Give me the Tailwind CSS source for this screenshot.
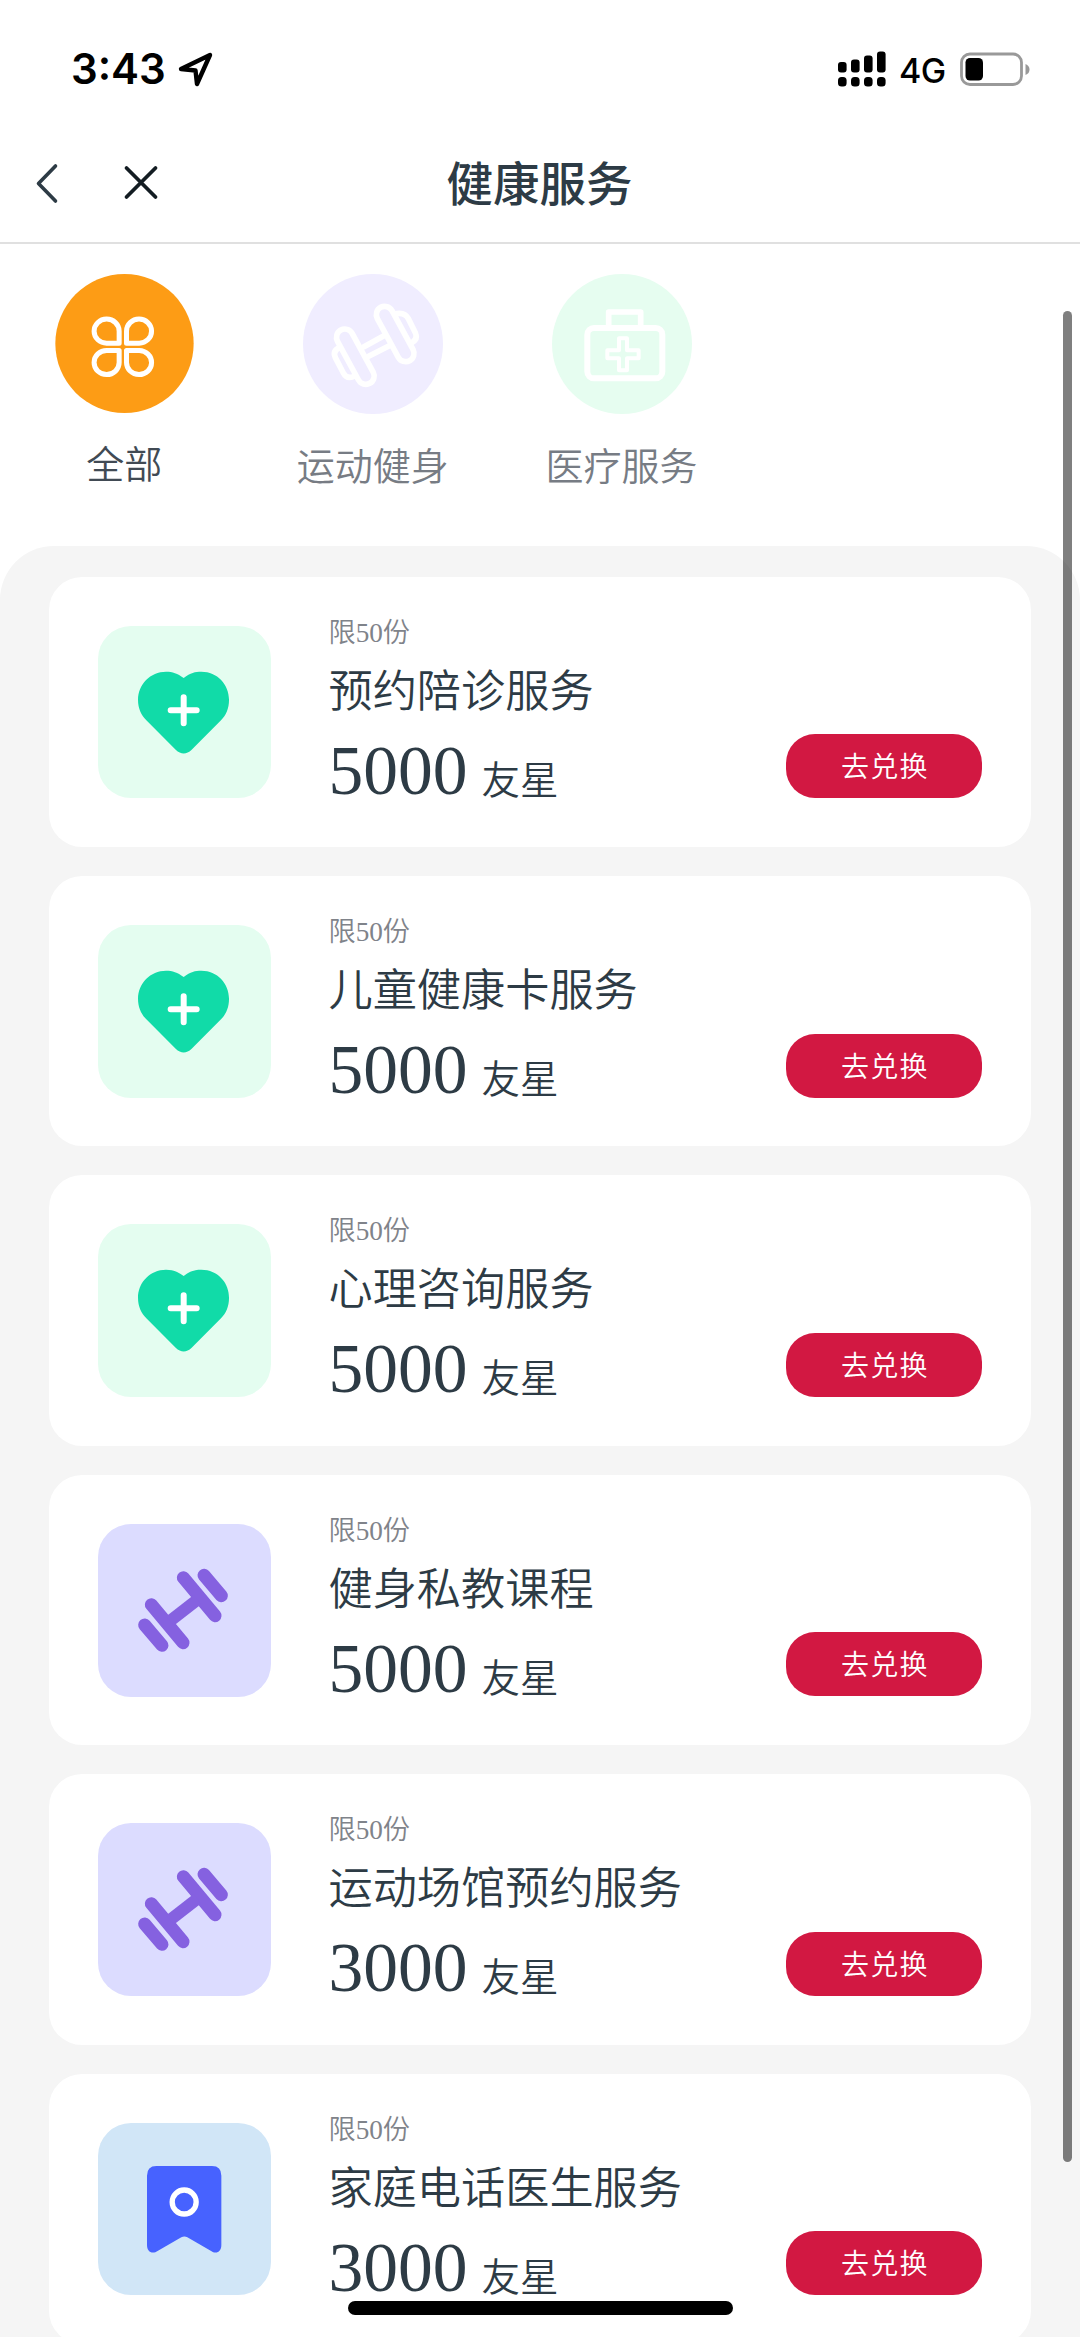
<!DOCTYPE html>
<html lang="zh-CN">
<head>
<meta charset="utf-8">
<title>健康服务</title>
<script src="https://cdn.jsdelivr.net/npm/@tailwindcss/browser@4"></script>
</head>
<body class="bg-white">
<svg class="hidden">
  <symbol id="heart" viewBox="24 47 518 518">
    <path fill="#11dba8" d="M281 203 C302 187 315 184 334 184 C382 184 417 222 417 268 C417 295 408 314 393 330 L305 418 Q281 441 257 418 L169 330 C154 314 144 295 144 268 C144 222 181 184 228 184 C248 184 262 189 281 203Z"/>
    <path stroke="#fff" stroke-width="18" stroke-linecap="round" d="M281 261V339M242 300H320"/>
  </symbol>
  <symbol id="dumbbell" viewBox="24 27 518 518">
    <g stroke="#8561e0" stroke-width="39" stroke-linecap="round" fill="none">
      <path d="M164 330L216 391M184 269L279 383M280 188L375 302M342 181L394 242"/>
      <path stroke-width="36" stroke-linecap="butt" d="M240 318L322 254"/>
    </g>
  </symbol>
  <symbol id="ribbon" viewBox="0 0 518 518">
    <path fill="#4762ff" d="M175 129H342Q370 129 370 158V366C370 387 354 395 338 383L268 343Q259 338 250 343L180 383C163 395 147 387 147 366V158Q147 129 175 129Z"/>
    <circle cx="258.500" cy="237" r="36" fill="none" stroke="#fff" stroke-width="16"/>
  </symbol>
</svg>

<div class="relative flex h-[2337px] w-[1080px] flex-col overflow-hidden bg-white font-['Noto_Sans_CJK_SC',sans-serif]">
  <!-- status bar -->
  <div class="flex h-[138px] shrink-0 items-center justify-between pr-[49px] pl-[71px]">
    <div class="flex items-center gap-[13px]">
      <span class="w-[94px] font-[Inter,sans-serif] text-[42px] leading-[50px] font-semibold text-black">3:43</span>
      <svg class="h-[36px] w-[36px]" viewBox="0 0 36 36" fill="none" stroke="#000" stroke-width="4.400" stroke-linejoin="round"><path d="M3 18L32 4L19 33L17.500 19.500Z"/></svg>
    </div>
    <div class="flex items-center">
      <svg class="h-[36px] w-[48px]" viewBox="0 0 48 36">
        <rect x="0" y="11" width="8.600" height="10.500" rx="3"/><rect x="13" y="8.500" width="8.600" height="13" rx="3"/><rect x="26" y="4.500" width="8.600" height="17" rx="3"/><rect x="39" y="0.500" width="8.600" height="21" rx="3"/>
        <rect x="0" y="26" width="8.600" height="9.500" rx="3.500"/><rect x="13" y="26" width="8.600" height="9.500" rx="3.500"/><rect x="26" y="26" width="8.600" height="9.500" rx="3.500"/><rect x="39" y="26" width="8.600" height="9.500" rx="3.500"/>
      </svg>
      <span class="ml-[13px] w-[48px] pt-[3px] font-[Inter,sans-serif] text-[34px] leading-[40px] font-medium tracking-[-0.5px] text-black">4G</span>
      <svg class="ml-[13px] h-[34px] w-[71px]" viewBox="0 0 71 34">
        <rect x="1.500" y="2" width="60" height="30.500" rx="8.500" fill="none" stroke="#999" stroke-width="2.800"/>
        <rect x="5.500" y="6" width="17.500" height="22.500" rx="4.500"/>
        <path fill="#999" d="M65.500 12Q69.500 13.500 69.500 17.500T65.500 23Z"/>
      </svg>
    </div>
  </div>

  <!-- navigation bar -->
  <div class="flex h-[106px] shrink-0 items-center border-b-2 border-[#e0e0e0] pl-[32px]">
    <svg class="-mt-[14px] h-[46px] w-[30px]" viewBox="0 0 30 46" fill="none" stroke="#2d3b45" stroke-width="3.600" stroke-linecap="round" stroke-linejoin="round"><path d="M23.500 6L6.500 23.500L23.500 41"/></svg>
    <svg class="-mt-[14px] ml-[56px] h-[46px] w-[46px]" viewBox="0 0 46 46" fill="none" stroke="#131c22" stroke-width="3.800" stroke-linecap="round"><path d="M8.500 8L37.500 37M37.500 8L8.500 37"/></svg>
    <h1 class="-mt-[18px] ml-[282.500px] text-[46.500px] leading-[60px] font-medium text-[#2d3b45]">健康服务</h1>
  </div>

  <!-- categories -->
  <div class="flex h-[301.500px] shrink-0 pt-[30px]">
    <div class="flex w-[248.500px] flex-col items-center">
      <svg class="h-[139px] w-[139px]" viewBox="76 72 414 416" fill="none">
        <ellipse cx="283" cy="280" rx="207" ry="208" fill="#fd9c15"/>
        <path stroke="#fff" stroke-width="15" stroke-linejoin="round" d="M267 279H230A37.500 36 0 1 1 267 243ZM289 279H327A37.500 36 0 1 0 289 243ZM267 301H230A37.500 36 0 1 0 267 337ZM289 301H327A37.500 36 0 1 1 289 337Z"/>
      </svg>
      <span class="mt-[20.500px] text-[38px] leading-[56px] font-[350] text-[#414a54]">全部</span>
    </div>
    <div class="flex w-[248.500px] flex-col items-center">
      <svg class="h-[140px] w-[140px]" viewBox="819 72 420 420" fill="none">
        <circle cx="1029" cy="282" r="210" fill="#f0edff"/>
        <g stroke="#fff" stroke-width="17" stroke-linecap="round" stroke-linejoin="round">
          <rect x="885" y="295" width="182" height="50" rx="25" transform="rotate(61.500 976 320)"/>
          <rect x="1004.500" y="227" width="182" height="50" rx="25" transform="rotate(61.500 1095.500 252)"/>
          <path d="M1002 290L1062 257M1016 319L1078 287"/>
          <path d="M928 293Q907 303 916 323L940 369Q950 388 970 380M1100 191Q1125 187 1135 206L1156 248Q1165 268 1144 279"/>
        </g>
      </svg>
      <span class="mt-[22px] text-[38px] leading-[56px] font-[350] text-[#777c84]">运动健身</span>
    </div>
    <div class="flex w-[249px] flex-col items-center">
      <svg class="h-[140px] w-[140px]" viewBox="15 12 420 420" fill="none">
        <circle cx="225" cy="222" r="210" fill="#e6fdf0"/>
        <g stroke="#fff" stroke-linejoin="round">
          <rect x="121" y="174" width="225" height="151" rx="20" stroke-width="18"/>
          <path stroke-width="17" d="M185 166V126H281V166"/>
          <path stroke-width="12" d="M216 205H240V241H275V265H240V301H216V265H181V241H216Z"/>
        </g>
      </svg>
      <span class="mt-[22px] text-[38px] leading-[56px] font-[350] text-[#777c84]">医疗服务</span>
    </div>
  </div>

  <!-- service list -->
  <main id="list" class="flex h-[1900px] shrink-0 flex-col gap-[29px] rounded-t-[54px] bg-[#f5f5f5] px-[48.700px] pt-[31.200px]"></main>

  <div class="absolute top-[311px] left-[1063px] h-[1851px] w-[9px] rounded-full bg-black/50"></div>
  <div class="absolute top-[2301px] left-[348px] h-[14px] w-[385px] rounded-full bg-black"></div>
</div>

<script>
  const services = [
    ['heart', 'bg-[#e4fdf0]', '预约陪诊服务', 5000],
    ['heart', 'bg-[#e4fdf0]', '儿童健康卡服务', 5000],
    ['heart', 'bg-[#e4fdf0]', '心理咨询服务', 5000],
    ['dumbbell', 'bg-[#dcdcff]', '健身私教课程', 5000],
    ['dumbbell', 'bg-[#dcdcff]', '运动场馆预约服务', 3000],
    ['ribbon', 'bg-[#d1e6f7]', '家庭电话医生服务', 3000],
  ];
  document.getElementById('list').innerHTML = services.map(([icon, tile, name, price]) => `
    <article class="flex h-[270.400px] shrink-0 rounded-[33px] bg-white pt-[49px] pr-[49px] pl-[49.300px]">
      <div class="h-[172.700px] w-[172.700px] shrink-0 rounded-[33px] ${tile}">
        <svg class="h-full w-full"><use href="#${icon}"/></svg>
      </div>
      <div class="-mt-[13px] ml-[57.800px] flex grow flex-col whitespace-nowrap text-[#2d3b45]">
        <span class="font-['Liberation_Serif','Noto_Sans_CJK_SC',serif] text-[27.200px] leading-[40px] font-[350] text-[#7f838a]">限50份</span>
        <h2 class="mt-[2px] text-[44.200px] leading-[66px] font-[350]">${name}</h2>
        <div class="mt-[10px] flex items-baseline gap-[14px] leading-[80px]">
          <span class="font-['Liberation_Serif',serif] text-[69.500px]">${price}</span>
          <span class="text-[38.500px] font-[350]">友星</span>
        </div>
      </div>
      <button class="mt-[108.500px] h-[64px] w-[196px] shrink-0 rounded-[29px] bg-[#d21842] pb-[2px] pl-px text-[28px] leading-[60px] font-[350] tracking-[1.200px] text-white">去兑换</button>
    </article>`).join('');
</script>
</body>
</html>
